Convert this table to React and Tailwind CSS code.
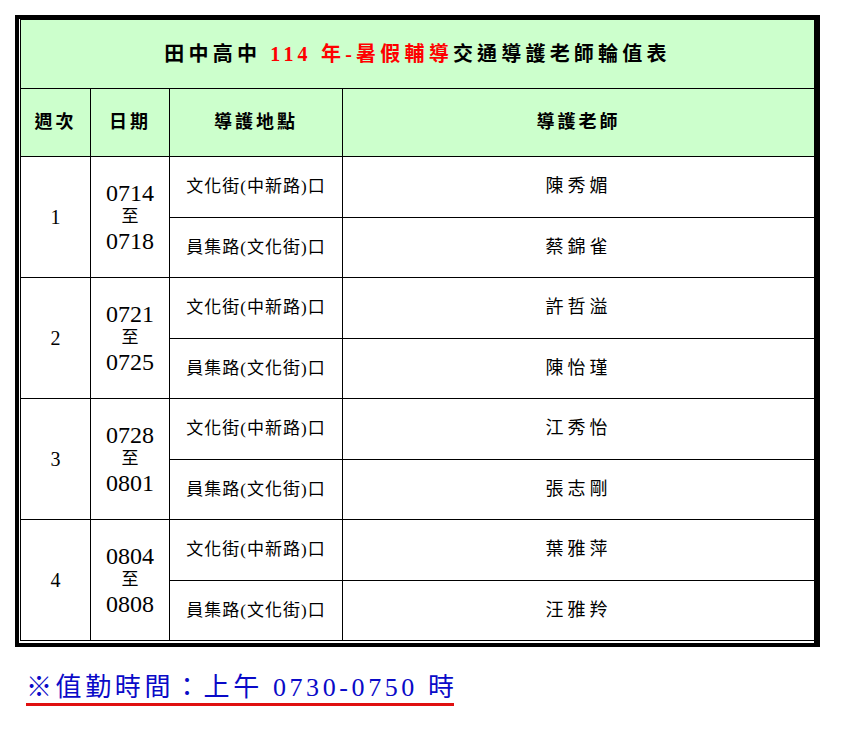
const weeks = [
  { n: 1, from: '0714', to: '0718', teachers: ['陳秀媚', '蔡錦雀'] },
  { n: 2, from: '0721', to: '0725', teachers: ['許哲溢', '陳怡瑾'] },
  { n: 3, from: '0728', to: '0801', teachers: ['江秀怡', '張志剛'] },
  { n: 4, from: '0804', to: '0808', teachers: ['葉雅萍', '汪雅羚'] },
];

const spots = ['文化街(中新路)口', '員集路(文化街)口'];

export default function App() {
  return (
    <div className="min-h-[731px] w-[846px] bg-white pt-[15px] pl-[15px] font-['Liberation_Serif','Noto_Sans_CJK_TC',serif] text-black">
      <div className="w-[805px] border-t-4 border-l-4 border-r-[6px] border-b-4 border-black pl-px pb-[2px]">
        <table className="table-fixed border-collapse w-[794px]">
          <colgroup>
            <col className="w-[70px]" />
            <col className="w-[79px]" />
            <col className="w-[173px]" />
            <col className="w-[472px]" />
          </colgroup>
          <tbody>
            <tr>
              <td colSpan={4} className="h-[69px] border border-black bg-[#ccffcc] text-center text-[20px] font-bold tracking-[4.2px]">
                田中高中 <span className="text-[#ff0000]">114 年-暑假輔導</span>交通導護老師輪值表
              </td>
            </tr>
            <tr className="bg-[#ccffcc] text-[18px] font-bold tracking-[3px]">
              <td className="h-[68px] border border-black text-center">週次</td>
              <td className="border border-black text-center">日期</td>
              <td className="border border-black text-center">導護地點</td>
              <td className="border border-black text-center">導護老師</td>
            </tr>
            {weeks.map((w) =>
              w.teachers.map((t, i) => (
                <tr key={w.n + '-' + i}>
                  {i === 0 && (
                    <>
                      <td rowSpan={2} className="border border-black text-center text-[20px]">
                        {w.n}
                      </td>
                      <td rowSpan={2} className="border border-black text-center">
                        <div className="flex flex-col items-center leading-[24px]">
                          <span className="text-[24px]">{w.from}</span>
                          <span className="text-[17px]">至</span>
                          <span className="text-[24px]">{w.to}</span>
                        </div>
                      </td>
                    </>
                  )}
                  <td className="h-[60.5px] border border-black text-center text-[17px] tracking-[1px]">{spots[i]}</td>
                  <td className="border border-black text-center text-[18px] tracking-[4px]">{t}</td>
                </tr>
              ))
            )}
          </tbody>
        </table>
      </div>
      <div className="mt-[26px] pl-[11px]">
        <span className="inline-block border-b-[3.5px] border-[#e01010] text-[26px] leading-[30px] tracking-[3.6px] text-[#0a0ac8]">
          ※值勤時間：上午 0730-0750 <span className="tracking-normal">時</span>
        </span>
      </div>
    </div>
  );
}
